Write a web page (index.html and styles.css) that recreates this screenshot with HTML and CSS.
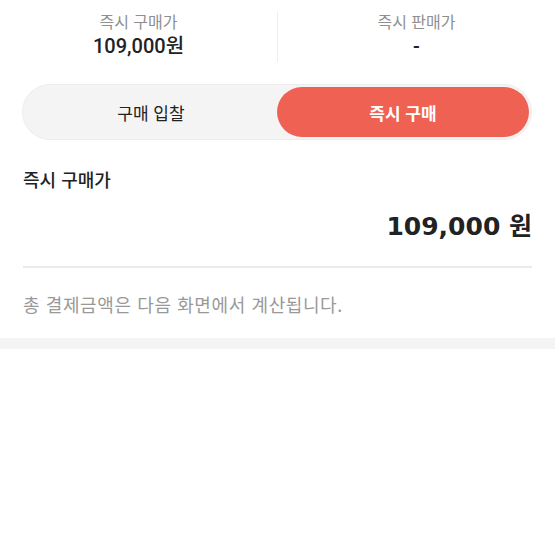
FILE: index.html
```html
<!DOCTYPE html>
<html lang="ko">
<head>
    <meta charset="UTF-8">
    <meta name="viewport" content="width=device-width, initial-scale=1.0">
    <title>즉시 구매</title>
    <link rel="stylesheet" href="styles.css">
</head>
<body>
    <div class="price-summary">
        <div class="price-col">
            <span class="price-label">즉시 구매가</span>
            <span class="price-value">109,000원</span>
        </div>
        <div class="price-col">
            <span class="price-label">즉시 판매가</span>
            <span class="price-value">-</span>
        </div>
    </div>

    <div class="tab-toggle">
        <button class="tab">구매 입찰</button>
        <button class="tab active">즉시 구매</button>
    </div>

    <div class="buy-price">
        <div class="buy-title">즉시 구매가</div>
        <div class="buy-amount">109,000 <span class="won">원</span></div>
    </div>

    <p class="notice">총 결제금액은 다음 화면에서 계산됩니다.</p>

    <div class="section-gap"></div>
</body>
</html>
```

FILE: styles.css
```css
:root {
    --accent: #ef6253;
    --text: #222;
    --muted: #8f8f8f;
    --line: #ebebeb;
    --soft-bg: #f4f4f4;
}
body, html {
    margin: 0;
    padding: 0;
    background: #fff;
    color: var(--text);
    font-family: 'Noto Sans CJK KR', 'Noto Sans', sans-serif;
}
.price-summary {
    display: flex;
    padding-top: 11px;
}
.price-col {
    flex: 1;
    display: flex;
    flex-direction: column;
    align-items: center;
}
.price-col + .price-col {
    border-left: 1px solid #efefef;
}
.price-label {
    font-size: 16px;
    line-height: 20px;
    color: var(--muted);
}
.price-value {
    font-family: Roboto, 'Noto Sans CJK KR', sans-serif;
    font-size: 20px;
    line-height: 31px;
    font-weight: 500;
}
.tab-toggle {
    display: flex;
    margin: 22px 23px 0 22px;
    padding: 2px;
    height: 50px;
    background: var(--soft-bg);
    border: 1px solid #ededed;
    border-radius: 28px;
}
.tab {
    flex: 1;
    border: none;
    background: transparent;
    border-radius: 25px;
    font-family: inherit;
    font-size: 17px;
    color: var(--text);
    padding: 0;
}
.tab.active {
    background: var(--accent);
    color: #fff;
    font-weight: 700;
}
.buy-price {
    margin: 0 23px;
    padding-top: 27px;
    padding-bottom: 21px;
    border-bottom: 2px solid var(--line);
}
.buy-title {
    font-size: 18px;
    line-height: 24px;
    font-weight: 500;
}
.buy-amount {
    margin-top: 15px;
    text-align: right;
    font-family: 'DejaVu Sans', sans-serif;
    font-size: 25px;
    line-height: 36px;
    font-weight: 700;
}
.buy-amount .won {
    font-family: 'Noto Sans CJK KR', sans-serif;
    font-weight: 700;
    font-size: 25px;
}
.notice {
    margin: 0;
    padding: 23px 23px 21px;
    font-size: 18px;
    line-height: 26px;
    letter-spacing: 0.6px;
    color: #999;
}
.section-gap {
    height: 11px;
    background: var(--soft-bg);
}
```
